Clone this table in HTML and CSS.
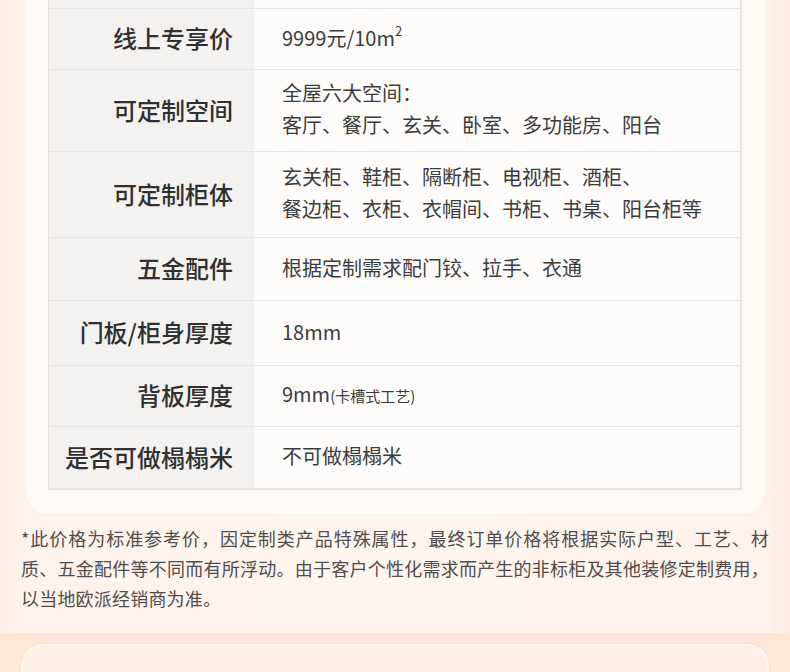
FILE: index.html
```html
<!DOCTYPE html>
<html lang="zh-CN">
<head>
<meta charset="utf-8">
<title>定制参数</title>
<link rel="stylesheet" href="styles.css">
</head>
<body>
<div class="page">
  <section class="card">
    <div class="table">
      <div class="row h-top"><div class="th"></div><div class="td"></div></div>
      <div class="row h61"><div class="th">线上专享价</div><div class="td"><div>9999元/10m<sup>2</sup></div></div></div>
      <div class="row h82"><div class="th">可定制空间</div><div class="td"><div>全屋六大空间：<br>客厅、餐厅、玄关、卧室、多功能房、阳台</div></div></div>
      <div class="row h86"><div class="th">可定制柜体</div><div class="td"><div>玄关柜、鞋柜、隔断柜、电视柜、酒柜、<br>餐边柜、衣柜、衣帽间、书柜、书桌、阳台柜等</div></div></div>
      <div class="row h63"><div class="th">五金配件</div><div class="td"><div>根据定制需求配门铰、拉手、衣通</div></div></div>
      <div class="row h65"><div class="th">门板/柜身厚度</div><div class="td"><div>18mm</div></div></div>
      <div class="row h61"><div class="th">背板厚度</div><div class="td"><div>9mm<span class="small">(卡槽式工艺)</span></div></div></div>
      <div class="row h62 last"><div class="th">是否可做榻榻米</div><div class="td"><div>不可做榻榻米</div></div></div>
    </div>
  </section>
  <p class="note">*此价格为标准参考价，因定制类产品特殊属性，最终订单价格将根据实际户型、工艺、材质、五金配件等不同而有所浮动。由于客户个性化需求而产生的非标柜及其他装修定制费用，以当地欧派经销商为准。</p>
  <div class="band">
    <div class="card2"></div>
  </div>
</div>
</body>
</html>
```
FILE: styles.css
```css
* { box-sizing: border-box; }
html, body { margin: 0; padding: 0; }
body {
  width: 790px;
  height: 672px;
  overflow: hidden;
  background: #fdf1e9;
  font-family: "Noto Sans CJK SC", "Noto Sans", sans-serif;
}
.page {
  background: linear-gradient(90deg, #fdede2 0%, #fef3ec 3%, #fef5ef 50%, #fef3ec 97%, #fdebe0 100%);
}
.card {
  margin: -40px 25px 0 26px;
  padding: 0 23px 24px 22px;
  background: linear-gradient(90deg, #fffaf6 0%, #fffbf8 50%, #fff9f5 100%);
  border-radius: 0 0 22px 22px;
  box-shadow: 0 0 4px rgba(250, 220, 200, 0.35);
}
.table {
  border-left: 1px solid #e6e3e0;
  border-right: 2px solid #e6e4e2;
  border-bottom: 2px solid #e6e4e2;
}
.row {
  display: grid;
  grid-template-columns: 205px 1fr;
  border-bottom: 1px solid #e7e5e3;
}
.row.last { border-bottom: none; }
.h-top { height: 49px; }
.h61 { height: 61px; }
.h62 { height: 61px; }
.h63 { height: 63px; }
.h65 { height: 65px; }
.h82 { height: 82px; }
.h86 { height: 86px; }
.th {
  background: #f3f2f1;
  display: flex;
  align-items: center;
  justify-content: flex-end;
  padding-right: 21px;
  padding-bottom: 3px;
  font-size: 24px;
  font-weight: 500;
  color: #303030;
}
.td {
  background: #fefcfb;
  display: flex;
  align-items: center;
  padding-left: 28px;
  padding-bottom: 3px;
  font-size: 20px;
  line-height: 32px;
  color: #3c3c3c;
}
.td sup {
  font-size: 13px;
  line-height: 0;
  vertical-align: 10px;
}
.small { font-size: 15px; }
.note {
  margin: 0;
  padding: 9px 21px 20px 21px;
  font-size: 18px;
  letter-spacing: 0.2px;
  line-height: 30px;
  color: #524d4a;
  text-align: justify;
}
.band {
  background: linear-gradient(180deg, #fce6d8 0%, #fde9dc 100%);
  padding: 11px 21px 0 21px;
  height: 60px;
}
.card2 {
  height: 60px;
  border: 2px solid #fff6ef;
  border-bottom: none;
  border-radius: 22px 22px 0 0;
  background: linear-gradient(180deg, #fdf0e6 0%, #fdeee3 100%);
  box-shadow: 0 -1px 3px rgba(240, 200, 180, 0.3);
}
```
